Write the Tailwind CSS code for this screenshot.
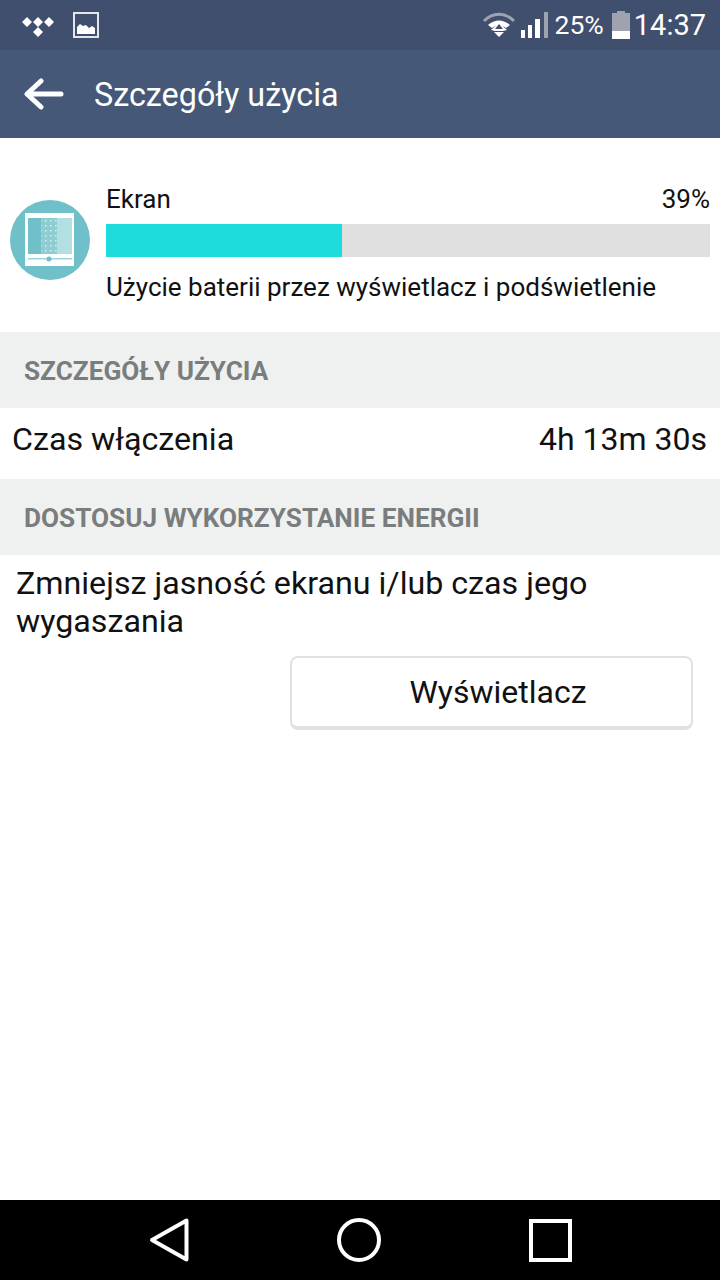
<!DOCTYPE html>
<html lang="pl">
<head>
    <meta charset="UTF-8">
    <meta name="viewport" content="width=device-width, initial-scale=1.0">
    <title>Szczegóły użycia</title>
    <script src="https://cdn.jsdelivr.net/npm/@tailwindcss/browser@4"></script>
</head>
<body class="bg-white">
<div class="w-[720px] h-[1280px] flex flex-col font-['Roboto',sans-serif] overflow-hidden">

    <!-- status bar -->
    <div class="h-[50px] bg-[#414f6e] flex items-center text-white shrink-0">
        <svg class="ml-[20px]" width="36" height="36" viewBox="0 0 36 36" fill="#fff">
            <path d="M7 2l5 5-5 5-5-5zM18 2l5 5-5 5-5-5zM29 2l5 5-5 5-5-5zM18 12l5 5-5 5-5-5z" transform="translate(0 8)"/>
        </svg>
        <svg class="ml-[17px]" width="26" height="26" viewBox="0 0 26 26">
            <rect x="1" y="1" width="24" height="24" fill="none" stroke="#e4e6ea" stroke-width="2"/>
            <path d="M4 22v-7l3-3 3 2 3-1 3 3 3-2 3 2v6z" fill="#fff"/>
        </svg>
        <div class="flex-1"></div>
        <svg width="34" height="28" viewBox="0 0 34 28">
            <path d="M2 10C11 1 23 1 32 10" fill="none" stroke="#9ea3af" stroke-width="3"/>
            <path d="M6 14C13 8 21 8 28 14l-4 3c-4-3-10-3-14 0z" fill="#fff"/>
            <path d="M17 12l8 7-4 1H13l-4-1z" fill="#fff"/>
            <path d="M12 21h10l-5 5z" fill="#fff"/>
            <path d="M13 18h8l-4-5z" fill="#414f6e"/>
        </svg>
        <svg class="ml-[4px]" width="30" height="30" viewBox="0 0 30 30">
            <rect x="1" y="20" width="4" height="8" fill="#fff"/>
            <rect x="8" y="15" width="4" height="13" fill="#fff"/>
            <rect x="15" y="9" width="5" height="19" fill="#fff"/>
            <rect x="24" y="2" width="4" height="26" fill="#9ea3af"/>
        </svg>
        <span class="ml-[5px] text-[26.5px] leading-none">25%</span>
        <svg class="ml-[8px]" width="18" height="30" viewBox="0 0 18 30">
            <path d="M5 1h8v2h5v26H0V3h5z" fill="#9ea3af"/>
            <rect y="21" width="18" height="8" fill="#fff"/>
        </svg>
        <span class="ml-[4px] mr-[14px] text-[29px] leading-none">14:37</span>
    </div>

    <!-- app bar -->
    <div class="h-[88px] bg-[#465877] flex items-center text-white shrink-0">
        <svg class="ml-[24px]" width="40" height="32" viewBox="0 0 40 32" fill="none" stroke="#fff" stroke-width="5" stroke-linecap="round" stroke-linejoin="round">
            <path d="M37 16H4M17 3L3 16l14 13"/>
        </svg>
        <span class="ml-[30px] pt-[2px] text-[32.3px] leading-none">Szczegóły użycia</span>
    </div>

    <!-- usage item -->
    <div class="h-[194px] flex items-start shrink-0">
        <svg class="ml-[10px] mt-[62px]" width="80" height="80" viewBox="0 0 80 80">
            <defs>
                <pattern id="dots" width="5" height="5" patternUnits="userSpaceOnUse">
                    <rect width="1.5" height="1.5" fill="#d5eef0"/>
                </pattern>
            </defs>
            <circle cx="40" cy="40" r="40" fill="#6fc0c8"/>
            <rect x="15" y="13" width="49" height="53" fill="#fff"/>
            <rect x="18" y="18" width="13" height="36" fill="#6fc0c8"/>
            <rect x="31" y="18" width="16" height="36" fill="#8fcdd3"/>
            <rect x="31" y="18" width="16" height="36" fill="url(#dots)"/>
            <rect x="47" y="18" width="15" height="36" fill="#b2dfe2"/>
            <rect x="18" y="58" width="44" height="1.5" fill="#9ad3d8"/>
            <circle cx="39" cy="59" r="2.5" fill="#6fc0c8"/>
        </svg>
        <div class="ml-[16px] w-[604px] mt-[47px]">
            <div class="flex justify-between text-[26px] leading-[28px] text-[#111]">
                <span>Ekran</span>
                <span>39%</span>
            </div>
            <div class="mt-[11px] h-[33px] bg-[#e0e0e0]">
                <div class="h-full bg-[#1fdcdc]" style="width: 39%"></div>
            </div>
            <p class="mt-[15px] text-[26px] leading-[30px] text-[#111] whitespace-nowrap">Użycie baterii przez wyświetlacz i podświetlenie</p>
        </div>
    </div>

    <!-- section header -->
    <div class="h-[76px] bg-[#eff1f0] flex items-center pl-[24px] pt-[4px] text-[26.2px] font-bold text-[#7a7d7d] shrink-0">SZCZEGÓŁY UŻYCIA</div>

    <div class="h-[71px] flex items-center justify-between pl-[12px] pr-[13px] pb-[9px] text-[32.2px] text-[#111] shrink-0">
        <span>Czas włączenia</span>
        <span class="text-[32px]">4h 13m 30s</span>
    </div>

    <div class="h-[76px] bg-[#eff1f0] flex items-center pl-[24px] pt-[4px] text-[26.2px] font-bold text-[#7a7d7d] shrink-0">DOSTOSUJ WYKORZYSTANIE ENERGII</div>

    <!-- tip -->
    <div class="flex-1 flex flex-col">
        <p class="mt-[9px] ml-[16px] w-[660px] text-[32.2px] leading-[38px] text-[#111]">Zmniejsz jasność ekranu i/lub czas jego wygaszania</p>
        <button class="ml-[290px] mt-[16px] w-[403px] h-[74px] pl-[13px] bg-white border-2 border-b-4 border-[#e0e2e1] rounded-[8px] text-[32px] text-[#111]">Wyświetlacz</button>
    </div>

    <!-- nav bar -->
    <div class="h-[80px] bg-black flex items-center shrink-0">
        <svg class="ml-[148px]" width="42" height="46" viewBox="0 0 42 46" fill="none" stroke="#fff" stroke-width="4" stroke-linejoin="round">
            <path d="M38.5 3.5v39L4 23z"/>
        </svg>
        <svg class="ml-[147px]" width="44" height="44" viewBox="0 0 44 44" fill="none" stroke="#fff" stroke-width="4">
            <circle cx="22" cy="22" r="20"/>
        </svg>
        <svg class="ml-[148px]" width="43" height="43" viewBox="0 0 43 43" fill="none" stroke="#fff" stroke-width="4">
            <rect x="2" y="2" width="39" height="39"/>
        </svg>
    </div>
</div>
</body>
</html>
